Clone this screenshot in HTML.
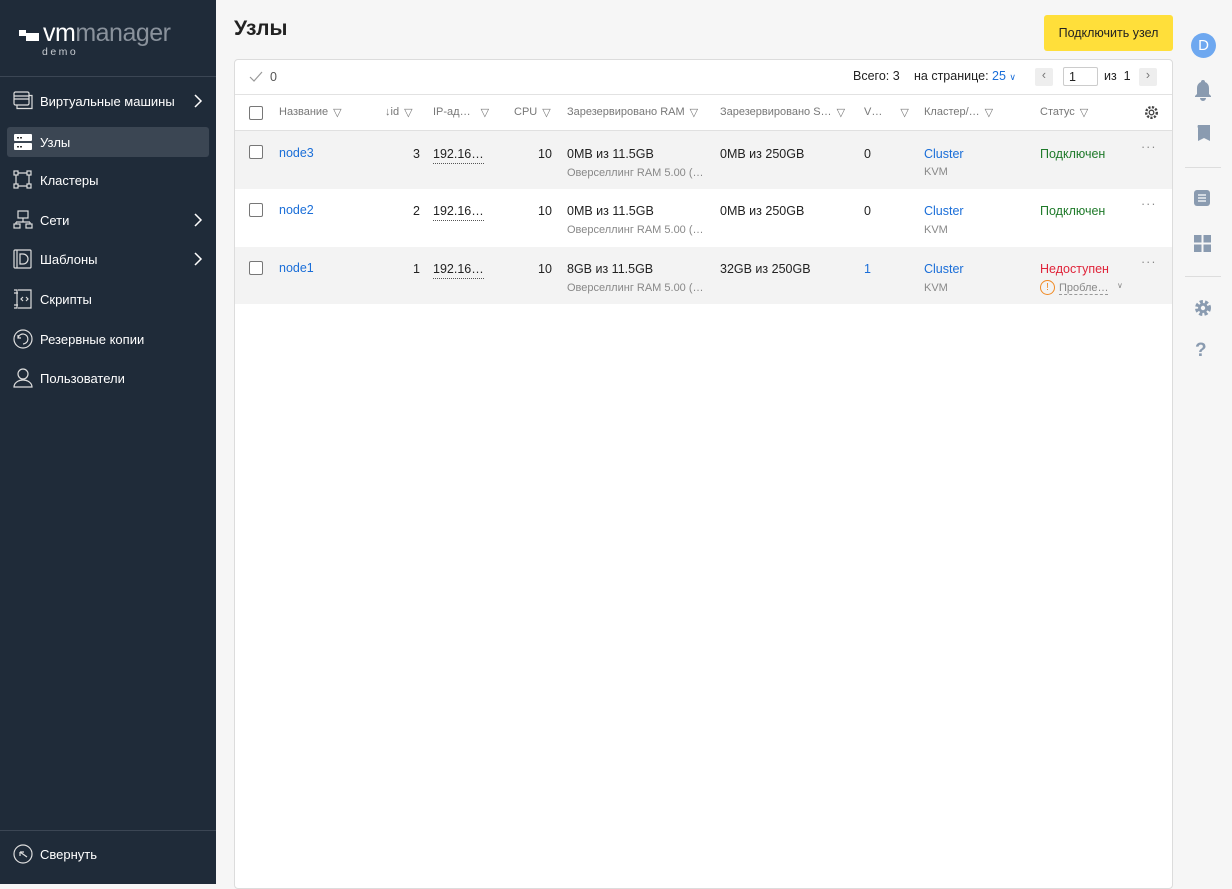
<!DOCTYPE html>
<html><head><meta charset="utf-8"><style>
*{box-sizing:border-box;margin:0;padding:0}
body{width:1232px;height:884px;overflow:hidden;background:#f6f6f6;font-family:"Liberation Sans","DejaVu Sans",sans-serif;font-size:12.5px;color:#222;position:relative}
.sb{position:absolute;left:0;top:0;width:216px;height:884px;background:#1f2b39;color:#fff}
.logo{position:absolute;left:19px;top:18px;font-size:25px;letter-spacing:-0.5px;line-height:30px}
.logo b{font-weight:normal;color:#fff}.logo span{color:#8a929c}
.demo{position:absolute;left:42px;top:46px;font-size:10.5px;letter-spacing:2.5px;color:#c8ccd1}
.sep{position:absolute;left:0;width:216px;height:1px;background:#3b4654}
.mi{position:absolute;left:7px;width:202px;height:30px;font-size:13px;color:#fff;display:flex;align-items:center;padding-left:33px;border-radius:3px}
.mi svg{position:absolute;left:6px;top:5px}
.mi .ch{position:absolute;right:6px;top:7px;left:auto}
.act{background:#3b4653}
h1{position:absolute;left:234px;top:17px;font-size:21px;font-weight:bold;color:#222}
.btn{position:absolute;left:1044px;top:15px;width:129px;height:36px;background:#ffdf3a;border-radius:3px;font-size:12.5px;line-height:36px;text-align:center;color:#222}
.panel{position:absolute;left:234px;top:59px;width:939px;height:830px;background:#fff;border:1px solid #dcdcdc;border-radius:4px}
.row{position:absolute;left:0;width:937px}
.t{position:absolute;white-space:nowrap}
.hd{color:#777;font-size:11px}
.f{display:inline-block;margin-left:5px;vertical-align:-1px}
.cb{position:absolute;left:14px;width:14px;height:14px;border:1px solid #777;border-radius:2px;background:#fff}
.lk{color:#1a6ed8}
.sub{color:#888;font-size:11px}
.ip{border-bottom:1px dotted #555;padding-bottom:2px}
.rr{position:absolute;left:1185px;top:0;width:47px;height:884px}
</style></head><body>
<div class="sb">
 <div class="logo"><svg width="22" height="14" style="vertical-align:-1px;margin-right:2px"><rect x="0" y="2" width="7" height="6" fill="#fff"/><rect x="7" y="5" width="13" height="8" fill="#fff"/></svg><b>vm</b><span>manager</span></div>
 <div class="demo">demo</div>
 <div class="sep" style="top:76px"></div>
 <div class="mi" style="top:86px"><svg width="20" height="20" fill="none" stroke="#ddd" stroke-width="1.2"><rect x="1" y="1" width="15" height="13" rx="1.5"/><path d="M1 5h15M1 8h15M4 14v3.5h15v-13h-3"/></svg>Виртуальные машины<svg class="ch" width="10" height="16" fill="none" stroke="#fff" stroke-width="1.5"><path d="M2 2l6 6-6 6"/></svg></div>
 <div class="mi act" style="top:127px"><svg width="20" height="20"><rect x="1" y="2" width="18" height="7" rx="1" fill="#fff"/><rect x="1" y="11" width="18" height="7" rx="1" fill="#fff"/><rect x="4" y="5" width="2" height="1.5" fill="#333"/><rect x="7" y="5" width="2" height="1.5" fill="#333"/><rect x="4" y="14" width="2" height="1.5" fill="#333"/><rect x="7" y="14" width="2" height="1.5" fill="#333"/></svg>Узлы</div>
 <div class="mi" style="top:165px"><svg width="20" height="20" fill="none" stroke="#ddd" stroke-width="1.2"><rect x="1" y="1" width="4" height="4"/><rect x="14" y="1" width="4" height="4"/><rect x="1" y="14" width="4" height="4"/><rect x="14" y="14" width="4" height="4"/><path d="M5 3h9M5 16h9M3 5v9M16 5v9"/></svg>Кластеры</div>
 <div class="mi" style="top:205px"><svg width="20" height="20" fill="none" stroke="#ddd" stroke-width="1.2"><rect x="5" y="1" width="10" height="7"/><path d="M10 8v4M3 12h14M3 12v2M17 12v2"/><rect x="1" y="14" width="6" height="4"/><rect x="13" y="14" width="6" height="4"/></svg>Сети<svg class="ch" width="10" height="16" fill="none" stroke="#fff" stroke-width="1.5"><path d="M2 2l6 6-6 6"/></svg></div>
 <div class="mi" style="top:244px"><svg width="20" height="20" fill="none" stroke="#ddd" stroke-width="1.2"><rect x="1" y="1" width="17" height="18" rx="1"/><path d="M4 1v18M7 5h3a5 5 0 010 10H7z"/></svg>Шаблоны<svg class="ch" width="10" height="16" fill="none" stroke="#fff" stroke-width="1.5"><path d="M2 2l6 6-6 6"/></svg></div>
 <div class="mi" style="top:284px"><svg width="20" height="20" fill="none" stroke="#ddd" stroke-width="1.2"><path d="M5 1h13v18H5M1 1h3v18H1M5 4H1M5 16H1"/><path d="M10 8l-2 2 2 2M13 8l2 2-2 2"/></svg>Скрипты</div>
 <div class="mi" style="top:324px"><svg width="20" height="20" fill="none" stroke="#ddd" stroke-width="1.2"><circle cx="10" cy="10" r="9"/><path d="M5 9a5 5 0 115 6M5 6v3h3"/></svg>Резервные копии</div>
 <div class="mi" style="top:363px"><svg width="20" height="20" fill="none" stroke="#ddd" stroke-width="1.2"><circle cx="10" cy="6" r="5"/><path d="M1 19a9 7 0 0118 0z"/></svg>Пользователи</div>
 <div class="sep" style="top:830px"></div>
 <div class="mi" style="top:839px"><svg width="20" height="20" fill="none" stroke="#ddd" stroke-width="1.2"><circle cx="10" cy="10" r="9"/><path d="M14 13L7 8M7 8v4M7 8h4"/></svg>Свернуть</div>
</div>
<h1>Узлы</h1>
<div class="btn">Подключить узел</div>
<div class="panel">
 <div class="row" style="top:0;height:35px;border-bottom:1px solid #e2e2e2">
  <svg class="t" style="left:14px;top:11px" width="14" height="12" fill="none" stroke="#999" stroke-width="1.2"><path d="M1 6l4 4 8-9"/></svg>
  <div class="t" style="left:35px;top:10px;color:#555">0</div>
  <div class="t" style="left:618px;top:9px">Всего: 3</div>
  <div class="t" style="left:679px;top:9px">на странице: <span class="lk">25</span> <span class="lk" style="font-size:9px">∨</span></div>
  <div class="t" style="left:800px;top:8px;width:18px;height:18px;background:#eee;border-radius:2px;text-align:center;color:#777">‹</div>
  <div class="t" style="left:828px;top:7px;width:35px;height:19px;border:1px solid #ccc;border-radius:2px;padding:2px 5px">1</div>
  <div class="t" style="left:869px;top:9px">из &nbsp;1</div>
  <div class="t" style="left:904px;top:8px;width:18px;height:18px;background:#eee;border-radius:2px;text-align:center;color:#777">›</div>
 </div>
 <div class="row" style="top:35px;height:36px;border-bottom:1px solid #e0e0e0">
  <div class="cb" style="top:11px"></div>
  <div class="t hd" style="left:44px;top:11px">Название<span class="f">▽</span></div>
  <div class="t hd" style="left:150px;top:11px">↓id<span class="f">▽</span></div>
  <div class="t hd" style="left:198px;top:11px">IP-ад…<span class="f" style="margin-left:10px">▽</span></div>
  <div class="t hd" style="left:279px;top:11px">CPU<span class="f">▽</span></div>
  <div class="t hd" style="left:332px;top:11px">Зарезервировано RAM<span class="f">▽</span></div>
  <div class="t hd" style="left:485px;top:11px">Зарезервировано S…<span class="f">▽</span></div>
  <div class="t hd" style="left:629px;top:11px">V…<span class="f" style="margin-left:18px">▽</span></div>
  <div class="t hd" style="left:689px;top:11px">Кластер/…<span class="f">▽</span></div>
  <div class="t hd" style="left:805px;top:11px">Статус<span class="f">▽</span></div>
  <svg class="t" style="left:909px;top:10px" width="15" height="15" fill="none" stroke="#444" stroke-width="1.3"><circle cx="7.5" cy="7.5" r="2.3"/><circle cx="7.5" cy="7.5" r="5.3" stroke-dasharray="2.2 1.4" stroke-width="2.4"/></svg>
 </div>
 <div class="row" style="top:71px;height:58px;background:#f3f3f3">
  <div class="cb" style="top:14px"></div>
  <div class="t lk" style="left:44px;top:15px">node3</div>
  <div class="t" style="left:178px;top:16px">3</div>
  <div class="t ip" style="left:198px;top:16px">192.16…</div>
  <div class="t" style="left:303px;top:16px">10</div>
  <div class="t" style="left:332px;top:16px">0MB из 11.5GB</div>
  <div class="t sub" style="left:332px;top:36px">Оверселлинг RAM 5.00 (…</div>
  <div class="t" style="left:485px;top:16px">0MB из 250GB</div>
  <div class="t" style="left:629px;top:16px">0</div>
  <div class="t lk" style="left:689px;top:16px">Cluster</div>
  <div class="t sub" style="left:689px;top:35px">KVM</div>
  <div class="t" style="left:805px;top:16px;color:#1f7a2a">Подключен</div>
  <div class="t" style="left:906px;top:9px;color:#888;letter-spacing:1px">···</div>
 </div>
 <div class="row" style="top:129px;height:58px">
  <div class="cb" style="top:14px"></div>
  <div class="t lk" style="left:44px;top:14px">node2</div>
  <div class="t" style="left:178px;top:15px">2</div>
  <div class="t ip" style="left:198px;top:15px">192.16…</div>
  <div class="t" style="left:303px;top:15px">10</div>
  <div class="t" style="left:332px;top:15px">0MB из 11.5GB</div>
  <div class="t sub" style="left:332px;top:35px">Оверселлинг RAM 5.00 (…</div>
  <div class="t" style="left:485px;top:15px">0MB из 250GB</div>
  <div class="t" style="left:629px;top:15px">0</div>
  <div class="t lk" style="left:689px;top:15px">Cluster</div>
  <div class="t sub" style="left:689px;top:35px">KVM</div>
  <div class="t" style="left:805px;top:15px;color:#1f7a2a">Подключен</div>
  <div class="t" style="left:906px;top:8px;color:#888;letter-spacing:1px">···</div>
 </div>
 <div class="row" style="top:187px;height:57px;background:#f3f3f3">
  <div class="cb" style="top:14px"></div>
  <div class="t lk" style="left:44px;top:14px">node1</div>
  <div class="t" style="left:178px;top:15px">1</div>
  <div class="t ip" style="left:198px;top:15px">192.16…</div>
  <div class="t" style="left:303px;top:15px">10</div>
  <div class="t" style="left:332px;top:15px">8GB из 11.5GB</div>
  <div class="t sub" style="left:332px;top:35px">Оверселлинг RAM 5.00 (…</div>
  <div class="t" style="left:485px;top:15px">32GB из 250GB</div>
  <div class="t lk" style="left:629px;top:15px">1</div>
  <div class="t lk" style="left:689px;top:15px">Cluster</div>
  <div class="t sub" style="left:689px;top:35px">KVM</div>
  <div class="t" style="left:805px;top:15px;color:#e0243a">Недоступен</div>
  <div class="t" style="left:805px;top:33px;width:15px;height:15px;border:1.3px solid #f08a24;border-radius:50%;color:#f08a24;font-size:10px;text-align:center;line-height:13px">!</div>
  <div class="t sub" style="left:824px;top:35px;border-bottom:1px dashed #999">Пробле…</div>
  <div class="t sub" style="left:882px;top:34px;font-size:8px">∨</div>
  <div class="t" style="left:906px;top:8px;color:#888;letter-spacing:1px">···</div>
 </div>
</div>
<div class="rr">
 <div class="t" style="left:6px;top:33px;width:25px;height:25px;border-radius:50%;background:#6ea8f0;color:#fff;text-align:center;line-height:25px;font-size:15px">D</div>
 <svg class="t" style="left:9px;top:79px" width="18" height="22" fill="#8a9bb0"><path d="M9 1a2 2 0 012 2a6 6 0 014 6v6l2 2v1H1v-1l2-2V9a6 6 0 014-6a2 2 0 012-2zM6 19h6a3 3 0 01-6 0z"/></svg>
 <svg class="t" style="left:10px;top:124px" width="16" height="18" fill="#8a9bb0"><path d="M3 1h12v16l-6-3-6 3V4a3 3 0 010-3z"/></svg>
 <div class="t" style="left:0;top:167px;width:36px;height:1px;background:#ddd"></div>
 <svg class="t" style="left:9px;top:189px" width="16" height="18"><rect x="0" y="1" width="16" height="16" rx="3" fill="#8a9bb0"/><path d="M4 6h8M4 9h8M4 12h8" stroke="#fff" stroke-width="1.3"/></svg>
 <svg class="t" style="left:9px;top:235px" width="17" height="17" fill="#8a9bb0"><rect x="0" y="0" width="7.5" height="7.5"/><rect x="9.5" y="0" width="7.5" height="7.5"/><rect x="0" y="9.5" width="7.5" height="7.5"/><rect x="9.5" y="9.5" width="7.5" height="7.5"/></svg>
 <div class="t" style="left:0;top:276px;width:36px;height:1px;background:#ddd"></div>
 <svg class="t" style="left:9px;top:299px" width="18" height="18"><circle cx="9" cy="9" r="6" fill="none" stroke="#8a9bb0" stroke-width="4" stroke-dasharray="3 2"/><circle cx="9" cy="9" r="5" fill="#8a9bb0"/><circle cx="9" cy="9" r="2.2" fill="#f6f6f6"/></svg>
 <div class="t" style="left:10px;top:340px;color:#8a9bb0;font-weight:bold;font-size:19px">?</div>
</div>
</body></html>
